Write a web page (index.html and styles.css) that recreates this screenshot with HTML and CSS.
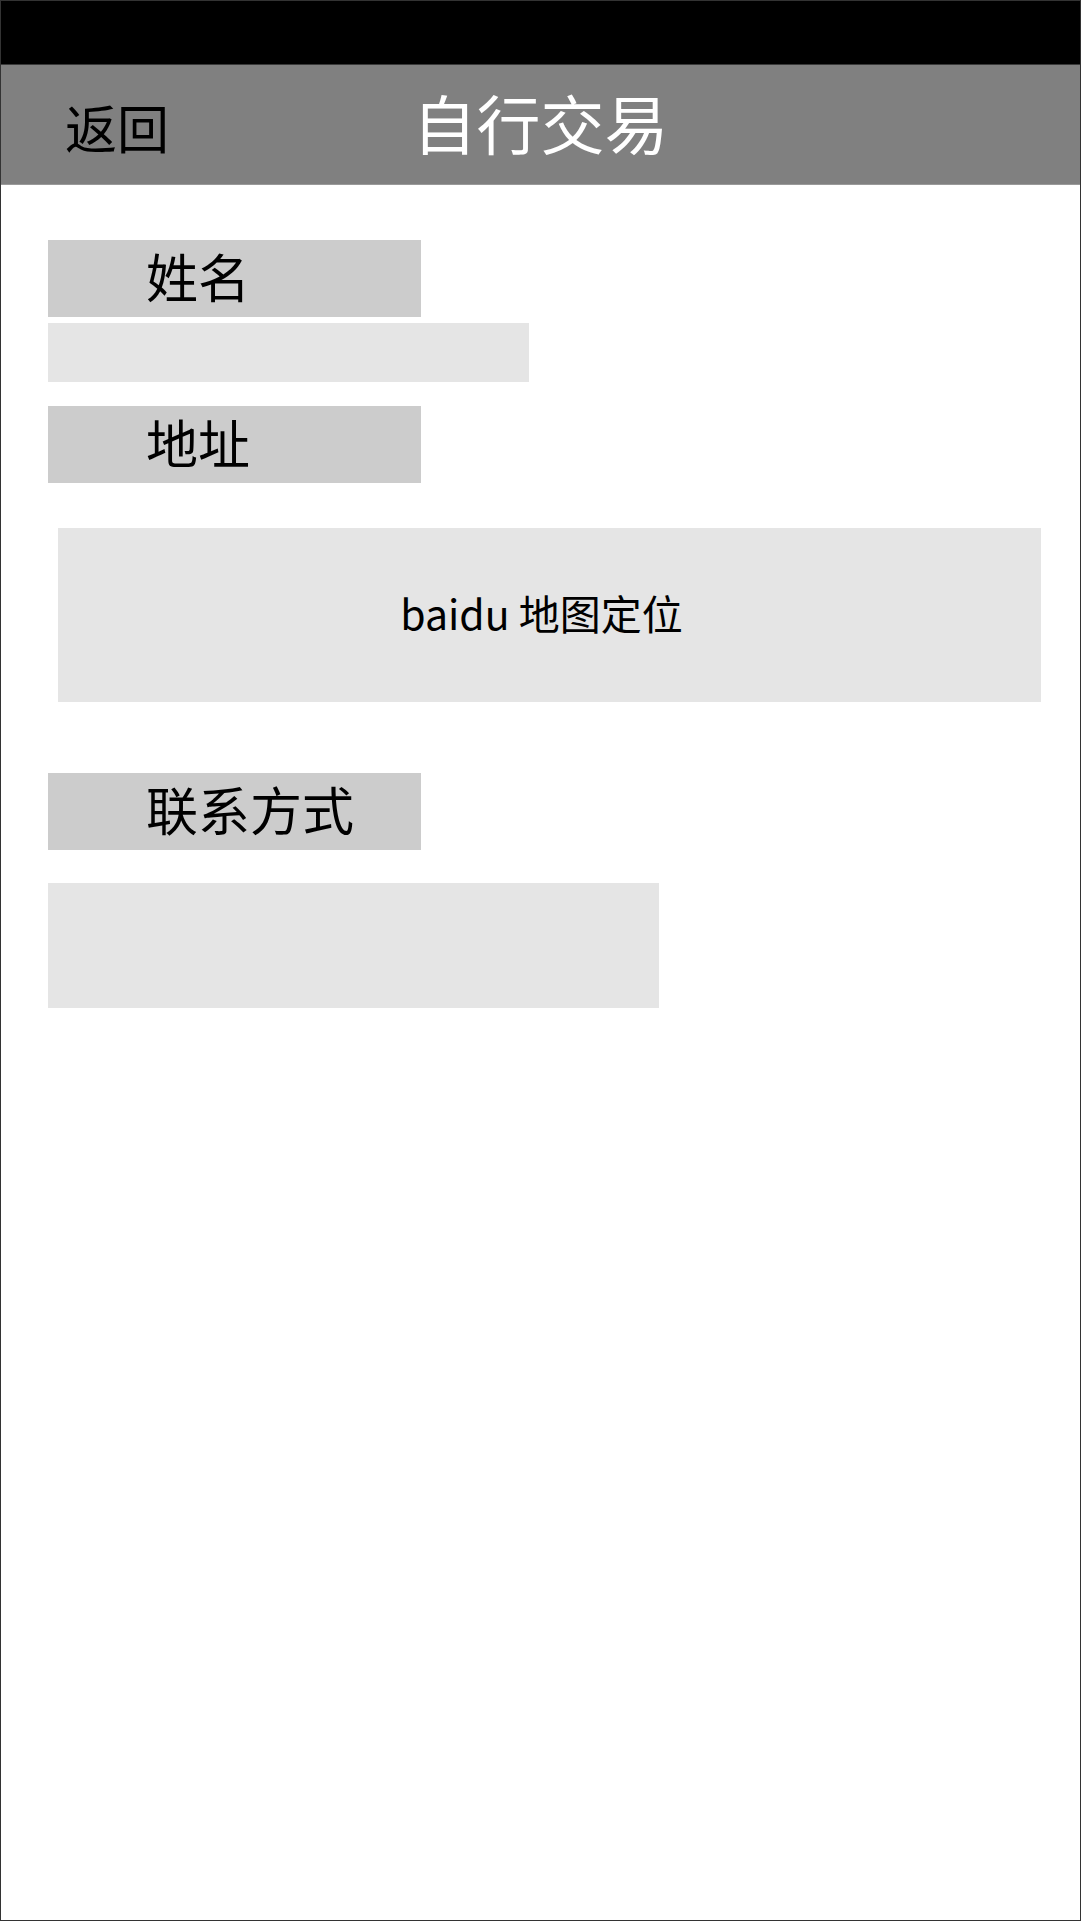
FILE: index.html
```html
<!DOCTYPE html>
<html lang="zh-CN">
<head>
<meta charset="utf-8">
<title>自行交易</title>
<link rel="stylesheet" href="styles.css">
</head>
<body>
<div class="page">
  <div class="status-bar"></div>
  <header class="nav">
    <a class="nav-back">返回</a>
    <h1 class="nav-title">自行交易</h1>
    <span class="nav-spacer"></span>
  </header>
  <main class="form">
    <div class="label label-name">姓名</div>
    <div class="field field-name"></div>
    <div class="label label-address">地址</div>
    <div class="map">baidu 地图定位</div>
    <div class="label label-contact">联系方式</div>
    <div class="field field-contact"></div>
  </main>
</div>
</body>
</html>
```

FILE: styles.css
```css
html, body {
  margin: 0;
  padding: 0;
  background: #ffffff;
}

body {
  font-family: "Noto Sans CJK SC", "Noto Sans", sans-serif;
  color: #000;
}

.page {
  box-sizing: border-box;
  width: 1081px;
  height: 1921px;
  border: 1px solid #333333;
  display: flex;
  flex-direction: column;
}

.status-bar {
  height: 63px;
  background: #000000;
  border-bottom: 1px solid #3a3a3a;
}

.nav {
  height: 119px;
  background: #808080;
  border-bottom: 1px solid #9a9a9a;
  display: grid;
  grid-template-columns: 1fr auto 1fr;
  align-items: center;
}

.nav-back {
  justify-self: start;
  padding-left: 64px;
  padding-top: 4px;
  font-size: 52px;
  line-height: 1;
  color: #000;
  text-decoration: none;
}

.nav-title {
  margin: 0;
  font-weight: 400;
  font-size: 64px;
  line-height: 1;
  color: #ffffff;
  padding-bottom: 8px;
}

.form {
  display: flex;
  flex-direction: column;
  align-items: flex-start;
  padding-left: 47px;
  padding-top: 55px;
}

.label {
  box-sizing: border-box;
  width: 373px;
  height: 77px;
  background: #cccccc;
  padding-left: 98px;
  font-size: 52px;
  line-height: 71px;
  white-space: nowrap;
}

.field {
  background: #e5e5e5;
}

.field-name {
  margin-top: 6px;
  width: 481px;
  height: 59px;
}

.label-address {
  margin-top: 24px;
}

.map {
  margin-top: 45px;
  margin-left: 10px;
  width: 983px;
  height: 174px;
  background: #e5e5e5;
  display: flex;
  align-items: center;
  justify-content: center;
  font-size: 41px;
  padding-right: 16px;
  padding-bottom: 6px;
  box-sizing: border-box;
}

.label-contact {
  margin-top: 71px;
}

.field-contact {
  margin-top: 33px;
  width: 611px;
  height: 125px;
}
```
